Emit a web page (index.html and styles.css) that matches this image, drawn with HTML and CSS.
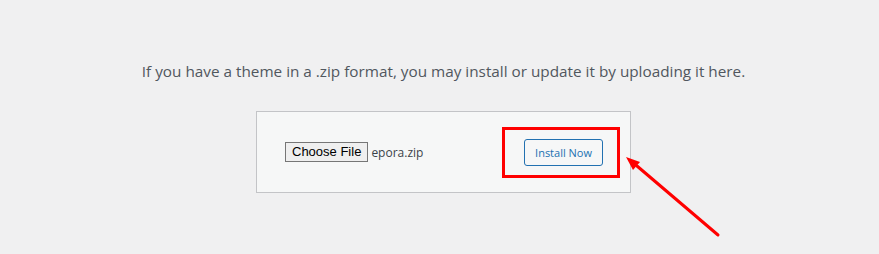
FILE: index.html
```html
<!DOCTYPE html>
<html lang="en">

<head>
  <meta charset="UTF-8" />
  <title>Upload Theme</title>
  <link rel="stylesheet" href="styles.css">
</head>

<body>
  <div class="wrap">
    <p class="install-help">If you have a theme in a .zip format, you may install or update it by uploading it here.</p>

    <form class="upload-form">
      <div class="file-field">
        <button type="button" class="file-btn">Choose File</button>
        <span class="file-name">epora.zip</span>
      </div>
      <div class="highlight">
        <button type="submit" class="install-btn">Install Now</button>
      </div>
    </form>
  </div>

  <svg class="arrow" width="879" height="254" viewBox="0 0 879 254">
    <line x1="718" y1="235" x2="637" y2="166" stroke="#ff0000" stroke-width="3" stroke-linecap="round" />
    <polygon points="626,157 640,162 633,170" fill="#ff0000" />
  </svg>
</body>

</html>
```

FILE: styles.css
```css
* {
  box-sizing: border-box;
}

body {
  margin: 0;
  background: #f0f0f1;
  font-family: 'Open Sans', sans-serif;
  color: #50575e;
  position: relative;
  height: 254px;
  overflow: hidden;
}

.wrap {
  padding: 61px 0 0 8px;
  display: flex;
  flex-direction: column;
  align-items: center;
}

.install-help {
  margin: 0;
  font-size: 15.3px;
  line-height: 20px;
}

.upload-form {
  margin-top: 30px;
  width: 375px;
  height: 82px;
  background: #f6f7f7;
  border: 1px solid #c3c4c7;
  display: flex;
  align-items: center;
  justify-content: space-between;
  padding: 0 10px 0 28px;
}

.file-field {
  display: flex;
  align-items: center;
  gap: 3px;
}

.file-btn {
  font-family: 'Liberation Sans', sans-serif;
  font-size: 13px;
  color: #000;
  background: #efefef;
  border: 1px solid #767676;
  border-radius: 0;
  padding: 1px 6px;
  height: 20px;
  line-height: 16px;
}

.file-name {
  font-size: 12px;
  color: #3c434a;
}

.highlight {
  border: 3px solid #ff0000;
  padding: 9px 14px 9px 19px;
}

.install-btn {
  font-family: 'Open Sans', sans-serif;
  font-size: 11px;
  color: #2271b1;
  background: #f6f7f7;
  border: 1px solid #2271b1;
  border-radius: 3px;
  height: 27px;
  padding: 0 10px;
}

.arrow {
  position: absolute;
  top: 0;
  left: 0;
}
```
